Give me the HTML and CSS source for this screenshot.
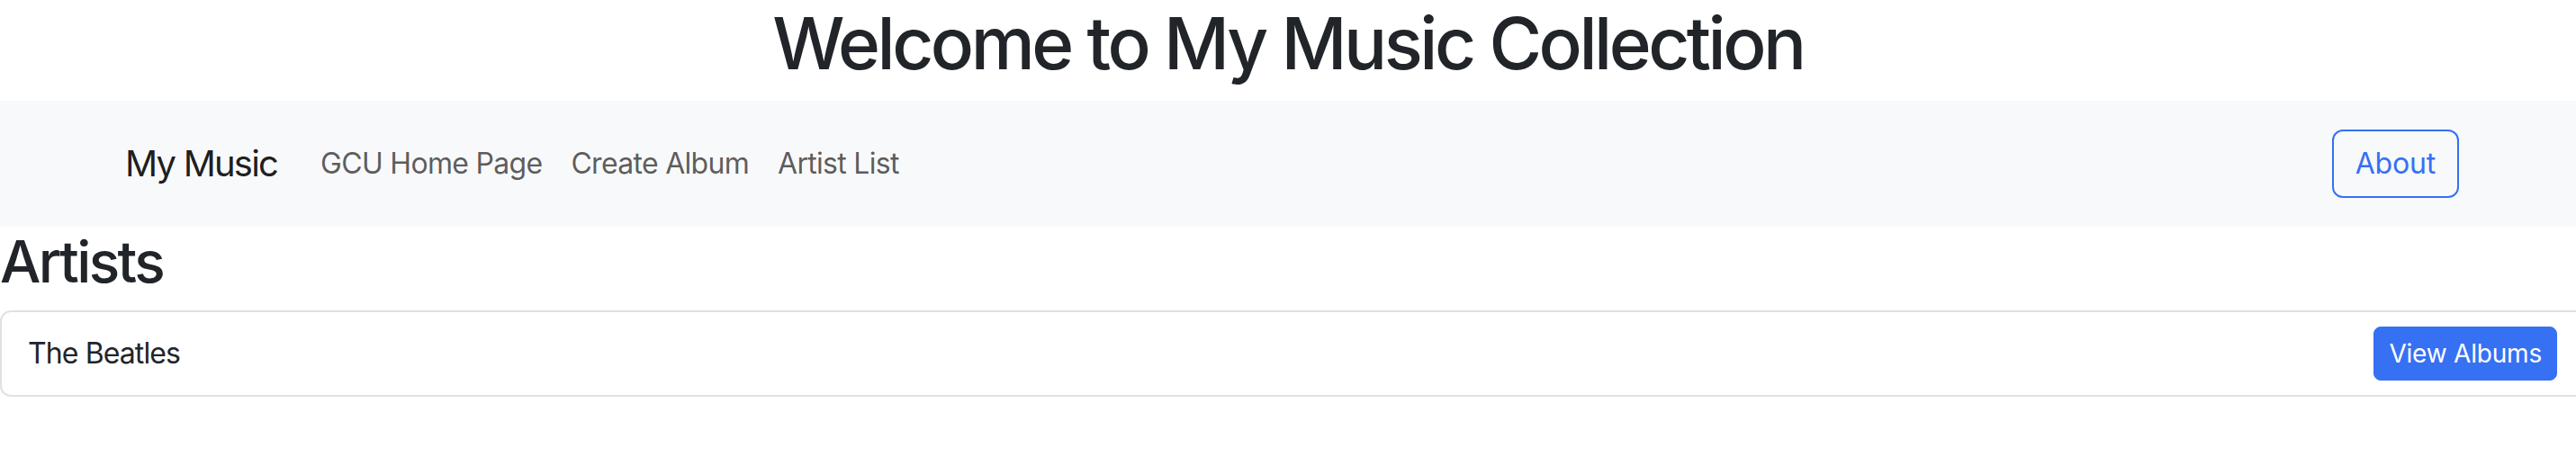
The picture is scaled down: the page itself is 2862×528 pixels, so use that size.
FILE: index.html
```html
<!DOCTYPE html>
<html lang="en">
<head>
<meta charset="utf-8">
<title>My Music</title>
<link rel="stylesheet" href="styles.css">
</head>
<body>
<h1 class="page-title">Welcome to My Music Collection</h1>
<nav class="navbar">
  <a class="brand" href="#">My Music</a>
  <ul class="nav-links">
    <li><a class="nav-link" href="#">GCU Home Page</a></li>
    <li><a class="nav-link" href="#">Create Album</a></li>
    <li><a class="nav-link" href="#">Artist List</a></li>
  </ul>
  <a class="btn-outline" href="#">About</a>
</nav>
<h2 class="section-title">Artists</h2>
<ul class="list-group">
  <li class="list-item">
    <span class="artist-name">The Beatles</span>
    <a class="btn-primary" href="#">View Albums</a>
  </li>
</ul>
</body>
</html>
```
FILE: styles.css
```css
html, body {
  margin: 0;
  padding: 0;
  overflow: hidden;
}
body {
  font-family: Inter, "Noto Sans", "Liberation Sans", sans-serif;
  color: #212529;
  background: #fff;
  font-size: 32px;
  line-height: 1.5;
}
a { text-decoration: none; }
.page-title {
  margin: 0 0 16px;
  font-size: 80px;
  font-weight: 500;
  line-height: 96px;
  text-align: center;
  letter-spacing: -3.5px;
}
.navbar {
  display: flex;
  align-items: center;
  background: #f8f9fa;
  padding: 32px 130px 32px 139px;
}
.brand {
  font-size: 40px;
  line-height: 60px;
  color: rgba(0, 0, 0, 0.9);
  margin-right: 32px;
  letter-spacing: -1.8px;
}
.nav-links {
  display: flex;
  list-style: none;
  margin: 0 auto 0 0;
  padding: 0;
}
.nav-link {
  display: block;
  padding: 8px 16px;
  color: rgba(0, 0, 0, 0.65);
  font-size: 32px;
  line-height: 48px;
  letter-spacing: -0.7px;
}
.btn-outline {
  display: inline-block;
  color: #3670f3;
  border: 2px solid #3670f3;
  border-radius: 12px;
  padding: 12px 24px;
  font-size: 32px;
  line-height: 48px;
  letter-spacing: -0.2px;
}
.section-title {
  margin: 0 0 16px;
  font-size: 64px;
  font-weight: 500;
  line-height: 77px;
  letter-spacing: -2.6px;
}
.list-group {
  list-style: none;
  margin: 0;
  padding: 0;
  width: calc(100% + 13px);
}
.list-item {
  display: flex;
  justify-content: space-between;
  align-items: center;
  padding: 16px 32px 16px 29px;
  border: 2px solid #dee2e6;
  border-radius: 12px;
}
.artist-name {
  letter-spacing: -0.9px;
}
.btn-primary {
  display: inline-block;
  background: #3670f3;
  color: #fff;
  border-radius: 8px;
  padding: 8px 16px;
  font-size: 28px;
  line-height: 42px;
  border: 1px solid #3670f3;
  letter-spacing: -0.2px;
}
```
